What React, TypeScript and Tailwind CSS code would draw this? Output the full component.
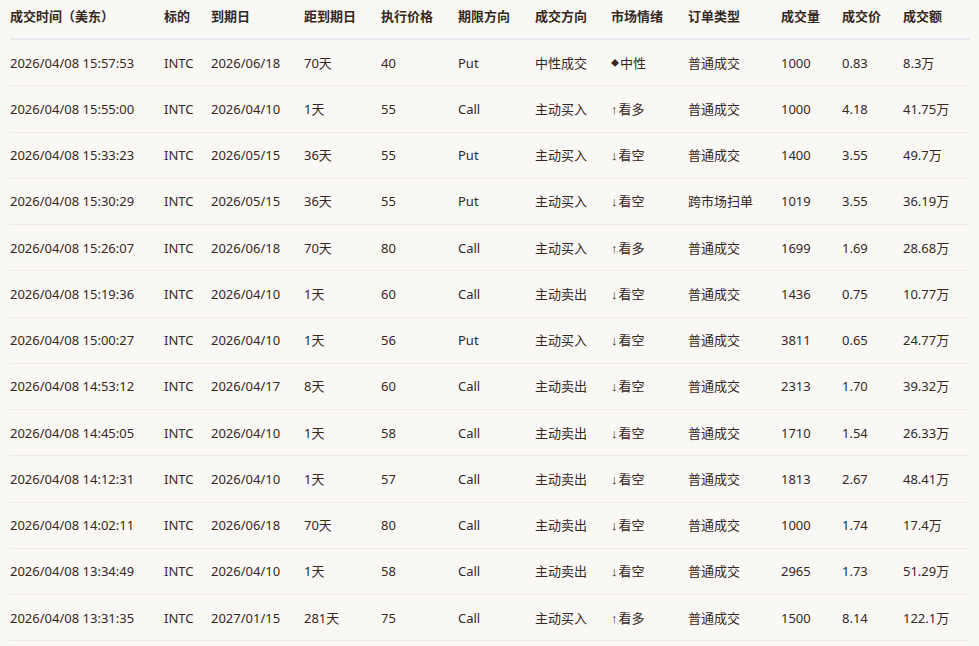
import React from 'react'

// Options trade tape for INTC: one header row and 13 trade rows
type Trade = [string, string, string, string, string, string, string, string, string, string, string, string]

const headers = ['成交时间（美东）', '标的', '到期日', '距到期日', '执行价格', '期限方向', '成交方向', '市场情绪', '订单类型', '成交量', '成交价', '成交额']

const trades: Trade[] = [
  ['2026/04/08 15:57:53', 'INTC', '2026/06/18', '70天', '40', 'Put', '中性成交', '◆中性', '普通成交', '1000', '0.83', '8.3万'],
  ['2026/04/08 15:55:00', 'INTC', '2026/04/10', '1天', '55', 'Call', '主动买入', '↑看多', '普通成交', '1000', '4.18', '41.75万'],
  ['2026/04/08 15:33:23', 'INTC', '2026/05/15', '36天', '55', 'Put', '主动买入', '↓看空', '普通成交', '1400', '3.55', '49.7万'],
  ['2026/04/08 15:30:29', 'INTC', '2026/05/15', '36天', '55', 'Put', '主动买入', '↓看空', '跨市场扫单', '1019', '3.55', '36.19万'],
  ['2026/04/08 15:26:07', 'INTC', '2026/06/18', '70天', '80', 'Call', '主动买入', '↑看多', '普通成交', '1699', '1.69', '28.68万'],
  ['2026/04/08 15:19:36', 'INTC', '2026/04/10', '1天', '60', 'Call', '主动卖出', '↓看空', '普通成交', '1436', '0.75', '10.77万'],
  ['2026/04/08 15:00:27', 'INTC', '2026/04/10', '1天', '56', 'Put', '主动买入', '↓看空', '普通成交', '3811', '0.65', '24.77万'],
  ['2026/04/08 14:53:12', 'INTC', '2026/04/17', '8天', '60', 'Call', '主动卖出', '↓看空', '普通成交', '2313', '1.70', '39.32万'],
  ['2026/04/08 14:45:05', 'INTC', '2026/04/10', '1天', '58', 'Call', '主动卖出', '↓看空', '普通成交', '1710', '1.54', '26.33万'],
  ['2026/04/08 14:12:31', 'INTC', '2026/04/10', '1天', '57', 'Call', '主动卖出', '↓看空', '普通成交', '1813', '2.67', '48.41万'],
  ['2026/04/08 14:02:11', 'INTC', '2026/06/18', '70天', '80', 'Call', '主动卖出', '↓看空', '普通成交', '1000', '1.74', '17.4万'],
  ['2026/04/08 13:34:49', 'INTC', '2026/04/10', '1天', '58', 'Call', '主动卖出', '↓看空', '普通成交', '2965', '1.73', '51.29万'],
  ['2026/04/08 13:31:35', 'INTC', '2027/01/15', '281天', '75', 'Call', '主动买入', '↑看多', '普通成交', '1500', '8.14', '122.1万'],
]

const cols = 'grid grid-cols-[154px_47px_93px_77px_77px_77px_76px_77px_93px_61px_61px_67px]'

function Sentiment({ value }: { value: string }) {
  const mark = value.slice(0, 1)
  const rest = value.slice(1)
  // diamond marker is drawn smaller than the text, arrows narrow
  if (mark === '◆') {
    return (
      <span className="flex items-center">
        <span className="mr-[1px] text-[8px] leading-none">◆</span>
        {rest}
      </span>
    )
  }
  return (
    <span>
      <span className="mr-[1px]" style={{ fontFamily: '"Liberation Sans", sans-serif' }}>
        {mark}
      </span>
      {rest}
    </span>
  )
}

export default function App() {
  return (
    <div
      className="min-h-[646px] w-full bg-[#f9f8f5] pl-[10px] text-[13px] text-[#36271f]"
      style={{ fontFamily: '"Noto Sans", "Noto Sans CJK SC", sans-serif' }}
    >
      <div className="w-[960px]">
        <div className={`${cols} h-[40px] border-b-2 border-[#ebeaee] pt-[6px] font-bold leading-[21px]`}>
          {headers.map((h) => (
            <div key={h} className="whitespace-nowrap">
              {h}
            </div>
          ))}
        </div>
        {trades.map((t, i) => (
          <div key={i} className={`${cols} h-[46.25px] items-center border-b border-[#eeebe7] pt-[1px] leading-[21px]`}>
            {t.map((cell, j) => (
              <div key={j} className="whitespace-nowrap">
                {j === 7 ? <Sentiment value={cell} /> : cell}
              </div>
            ))}
          </div>
        ))}
      </div>
    </div>
  )
}
